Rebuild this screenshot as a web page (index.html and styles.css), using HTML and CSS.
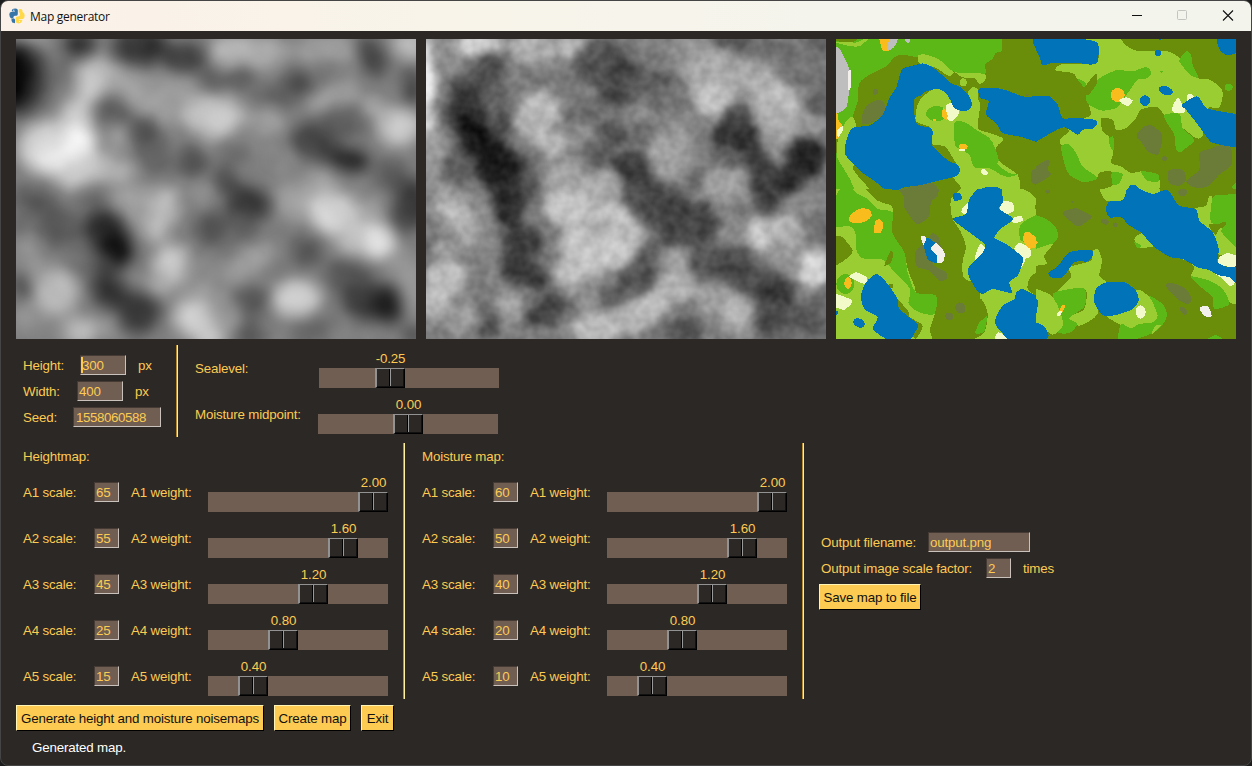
FILE: index.html
```html
<!DOCTYPE html>
<html lang="en">
<head>
<meta charset="utf-8">
<title>Map generator</title>
<link rel="stylesheet" href="styles.css">
</head>
<body>
<div class="window">
  <header class="titlebar">
    <svg class="logo" viewBox="0 0 16 16">
      <path fill="#3775a9" d="M4.500.8Q7.500-.2 8.800 1.800V6Q8.800 7.600 7.400 7.800H5.800Q4.200 8 4.200 10.400H2.200Q.2 9 .3 6.300Q.5 4 2.200 4H6V3.500H2.800V2.400Q3.200 1.200 4.500.8Z"/>
      <path fill="#ffd94a" d="M9.800 1.200Q12.800.6 13.500 2.500V4Q15.700 4.500 15.700 7.500Q15.600 10.500 14 11H9.800V11.800H13.200V13Q12.500 15.200 9.600 15.400Q6.600 15 6.600 13.500V10.400Q7 8.800 8.600 8.600L10.200 8.300Q11.200 7.500 11 5.500L9.800 4Z"/>
      <path fill="#3775a9" d="M2.200 11.500l2.600-1.200 1.200 1.200v3.700l-2.800-.8z"/><circle cx="4.800" cy="2.200" r=".6" fill="#fff"/><circle cx="10.500" cy="13.500" r=".6" fill="#fff"/>
    </svg>
    <span class="title">Map generator</span>
    <svg class="controls" viewBox="0 0 110 30">
      <path d="M1 14.500h10" stroke="#111"/>
      <rect x="46.500" y="9.500" width="9" height="9" rx="1" fill="none" stroke="#c4c4c0"/>
      <path d="M92 9.500l10 10M102 9.500l-10 10" stroke="#111" stroke-width="1.100"/>
    </svg>
  </header>
  <main class="content">
    <section class="maps">
      <svg class="map" id="height" viewBox="0 3 1200 900"></svg>
      <svg class="map" id="moisture" viewBox="0 3 1200 900"></svg>
      <svg class="map" id="terrain" viewBox="0 3 1200 900"></svg>
    </section>
    <section class="general">
      <div class="size">
        <div class="field"><label class="l-height">Height:</label><span class="input w46"><i class="caret"></i>300</span><label class="unit">px</label></div>
        <div class="field"><label class="l-width">Width:</label><span class="input w46">400</span><label class="unit">px</label></div>
        <div class="field"><label class="l-seed">Seed:</label><span class="input w88 seed">1558060588</span></div>
      </div>
      <div class="levels">
        <div class="level"><label class="l-sea">Sealevel:</label><div class="slider" style="--x:56px"><output>-0.25</output><div class="track"><b class="thumb"></b></div></div></div>
        <div class="level"><label class="l-mid">Moisture midpoint:</label><div class="slider" style="--x:75px"><output>0.00</output><div class="track"><b class="thumb"></b></div></div></div>
      </div>
    </section>
    <section class="settings">
      <div class="weights" id="heightWeights"><h2>Heightmap:</h2></div>
      <div class="weights" id="moistureWeights"><h2>Moisture map:</h2></div>
      <div class="output">
        <div class="field"><label class="l-file">Output filename:</label><span class="input w102">output.png</span></div>
        <div class="field"><label class="l-factor">Output image scale factor:</label><span class="input w25">2</span><label class="unit">times</label></div>
        <button class="btn b-save">Save map to file</button>
      </div>
    </section>
    <section class="actions">
      <button class="btn b-gen">Generate height and moisture noisemaps</button>
      <button class="btn b-create">Create map</button>
      <button class="btn b-exit">Exit</button>
    </section>
    <p class="status">Generated map.</p>
  </main>
</div>
<script src="script.js"></script>
</body>
</html>
```
FILE: styles.css
```css
* { box-sizing: border-box; }
body { margin: 0; width: 1252px; height: 766px; overflow: hidden; background: #1c1c1c; font-family: "Liberation Sans", Arial, sans-serif; }
.window { width: 1252px; height: 766px; border: 1px solid #454545; border-radius: 8px; overflow: hidden; background: #2c2825; color: #fdcb52; font-size: 13.333px; letter-spacing: -.17px; }
.titlebar { height: 30px; display: flex; align-items: center; padding-left: 8px; background: linear-gradient(90deg, #fbf1e8, #f8f4ea 35%, #f5f4ec 65%, #f3f4ec); color: #111; }
.logo { width: 16px; height: 16px; margin-top: -1px; }
.title { margin-left: 5px; font: 12px "Open Sans", sans-serif; letter-spacing: -.28px; }
.controls { width: 110px; height: 30px; margin-left: auto; margin-right: 10px; }
.content { padding: 8px 15px 0; }
.maps { display: flex; gap: 10px; }
.map { display: block; width: 400px; height: 300px; overflow: hidden; background: #808080; }
label, output, h2, .status, .btn { white-space: nowrap; }
.general { display: flex; margin-top: 6px; height: 92px; }
.size { width: 162px; padding: 10px 0 0 7px; box-shadow: inset -1px 0 #fff29a, inset -2px 0 #b98a2e; display: flex; flex-direction: column; gap: 6px; }
.field { display: flex; height: 20px; line-height: 21px; }
.input { height: 20px; padding: 0 1px; line-height: 19px; background: #705e52; border: 1px solid; border-color: #463b34 #c9c1bb #c9c1bb #463b34; white-space: nowrap; position: relative; letter-spacing: -.17px; }
.seed { padding-left: 2px; letter-spacing: -.41px; }
.caret { position: absolute; left: 0; top: 1px; width: 2px; height: 16px; background: #fdcb52; }
.w46 { width: 46px; } .w88 { width: 88px; } .w102 { width: 102px; } .w25 { width: 25px; }
.l-height { width: 57px; } .l-width { width: 54px; } .l-seed { width: 50px; }
.unit { margin-left: 12px; }
.levels { padding-left: 17px; }
.level { display: flex; height: 46px; padding-top: 3px; }
.l-sea, .l-mid { line-height: 42px; }
.l-sea { width: 124px; } .l-mid { width: 123px; }
.slider { width: 180px; }
.slider output { width: 31px; margin-left: var(--x); display: flex; justify-content: center; height: 20px; line-height: 21px; }
.track { height: 20px; background: #705e52; }
.thumb { display: flex; width: 30px; height: 20px; margin-left: var(--x); background: linear-gradient(90deg, transparent 12px, #000 12px 13px, #999 13px 14px, transparent 14px) #2c2825; border: solid; border-width: 1px 1px 1px 2px; border-color: #929292 #000 #000 #929292; box-shadow: inset -1px -1px #111; }
.settings { display: flex; height: 256px; margin-top: 6px; }
.weights { box-shadow: inset -1px 0 #fff29a, inset -2px 0 #b98a2e; padding: 3px 0 0 7px; }
#heightWeights { width: 389px; }
#moistureWeights { width: 399px; padding-left: 17px; }
h2 { margin: 0; font-size: 13.333px; font-weight: normal; height: 26px; line-height: 21px; }
.weight { display: flex; height: 46px; }
.weight > label, .weight > .input { margin-top: 10px; line-height: 21px; height: 20px; }
.weight > .input { width: 25px; line-height: 19px; }
.l-scale { width: 71px; }
.l-weight { width: 77px; margin-left: 12px; }
.output { padding: 89px 0 0 15px; display: flex; flex-direction: column; gap: 6px; }
.output .field { padding-left: 2px; }
.l-file { width: 107px; } .l-factor { width: 165px; }
.btn { height: 26px; padding: 0; text-align: center; font: 13.333px "Liberation Sans", Arial, sans-serif; line-height: 25px; color: #111; background: #fdcb52; border: 1px solid; border-color: #fff4b4 #000 #000 #fff4b4; letter-spacing: -.17px; }
.b-save { width: 102px; }
.actions { display: flex; gap: 10px; margin-top: 6px; }
.b-gen { width: 248px; } .b-create { width: 77px; } .b-exit { width: 33px; }
.status { margin: 7px 0 0 16px; line-height: 20px; color: #fff; }
#terrain { shape-rendering: crispEdges; background: #6b8e0a; }
```
FILE: script.js
```js
// Weight rows
function rows(id, scales) {
  const weights = ['2.00', '1.60', '1.20', '0.80', '0.40'];
  document.getElementById(id).insertAdjacentHTML('beforeend', scales.map((s, i) =>
    `<div class="weight"><label class="l-scale">A${i + 1} scale:</label><span class="input">${s}</span>` +
    `<label class="l-weight">A${i + 1} weight:</label><div class="slider" style="--x:${150 - i * 30}px">` +
    `<output>${weights[i]}</output><div class="track"><b class="thumb"></b></div></div></div>`).join(''));
}
rows('heightWeights', [65, 55, 45, 25, 15]);
rows('moistureWeights', [60, 50, 40, 20, 10]);

// Noise maps: soft blobs given as x y rx ry angle grey
function noise(id, blur, base, text, grain) {
  const blobs = text.trim().split(/\s*;\s*/).filter(Boolean).map(t => {
    const [x, y, rx, ry, a, g] = t.split(/\s+/).map(Number);
    return `<ellipse cx="${x}" cy="${y}" rx="${rx}" ry="${ry}" transform="rotate(${a} ${x} ${y})" fill="rgb(${g},${g},${g})"/>`;
  }).join('');
  document.getElementById(id).innerHTML =
    `<defs><filter id="${id}B" filterUnits="userSpaceOnUse" x="-200" y="-200" width="1600" height="1300" color-interpolation-filters="sRGB"><feGaussianBlur stdDeviation="${blur}"/></filter>` +
    `<filter id="${id}G" color-interpolation-filters="sRGB" x="0" y="0" width="1" height="1"><feTurbulence type="fractalNoise" baseFrequency="${grain[0]}" numOctaves="2" seed="7"/><feColorMatrix values="1.6 0 0 0 -.3 1.6 0 0 0 -.3 1.6 0 0 0 -.3 0 0 0 0 1"/></filter></defs>` +
    `<g filter="url(#${id}B)"><rect x="-200" y="-200" width="1600" height="1300" fill="rgb(${base},${base},${base})"/>${blobs}</g>` +
    `<rect y="3" width="1200" height="900" filter="url(#${id}G)" opacity="${grain[1]}"/>`;
}
noise('height', 23, 126, `
30 -10 70 30 0 165; 0 120 95 115 0 52; -10 120 55 90 0 0; 190 20 45 40 0 40; 130 100 30 60 20 110;
370 25 85 60 0 58; 410 20 30 40 0 38; 510 60 70 45 0 62; 700 45 125 55 0 172; 640 20 50 30 0 190; 930 40 100 50 0 158;
1070 55 35 65 -30 62; 1185 20 55 45 0 195; 1190 145 30 60 0 65;
240 120 65 65 -20 190; 220 150 35 60 20 205; 330 150 60 70 -30 165; 460 160 90 50 0 158; 600 130 45 35 0 95; 680 120 40 35 0 88; 850 135 45 45 20 68; 780 180 70 40 0 98; 930 100 60 30 0 115; 985 165 50 40 0 160; 925 195 45 40 0 165;
290 220 60 45 20 90; 420 230 60 60 0 160; 590 230 100 60 0 196; 600 260 50 40 0 208; 750 250 60 45 0 160; 180 240 50 60 0 205;
120 330 115 85 0 212; 190 310 50 50 0 255; 110 360 45 40 0 242; 210 400 90 50 -15 210; 300 400 70 30 -10 185; 310 300 40 50 0 155;
390 290 50 60 -40 78; 420 360 60 50 0 100; 530 370 45 45 0 80; 650 350 60 40 0 110; 580 320 30 30 0 145; 780 350 60 60 0 135;
980 250 80 50 0 95; 890 310 65 55 20 68; 960 350 70 35 20 58; 1010 370 55 30 0 30; 1150 265 65 60 0 205; 1080 215 50 30 35 175;
1130 410 50 50 0 85; 1190 500 55 75 10 52; 1160 550 40 40 0 75; 20 490 40 50 0 95; 70 500 50 35 0 80; 10 560 35 70 0 110; 130 570 75 60 0 90; 230 480 45 50 -45 105;
350 500 70 65 20 160; 450 500 50 55 0 190; 420 570 35 40 30 200; 520 500 40 40 0 130; 560 460 40 30 0 150;
630 430 35 45 -35 72; 700 500 65 55 0 52; 600 570 60 50 0 78; 680 570 60 40 0 95; 780 590 60 40 0 125; 830 490 50 60 0 165;
910 440 50 50 0 165; 960 530 85 65 20 210; 925 530 35 35 0 225; 1080 610 60 55 -20 232; 1015 630 50 35 0 190; 1070 520 40 40 0 160;
270 580 65 70 -40 42; 300 640 50 55 0 10; 260 700 40 60 0 65; 280 760 50 50 20 45; 370 820 60 70 30 52; 200 670 40 60 0 110; 40 640 50 50 0 145;
870 640 50 40 35 82; 800 680 60 40 0 115; 720 660 65 40 -30 162; 660 700 50 35 0 160; 470 680 60 60 -30 205; 430 740 50 40 0 170; 560 700 60 50 0 135; 560 780 70 50 0 155;
1000 720 80 60 30 82; 1050 790 75 60 30 62; 1115 800 45 60 -20 28; 1170 690 50 60 20 150; 1190 780 30 70 0 155; 
30 740 45 40 0 75; 120 760 70 70 0 190; 60 700 40 30 0 150; 40 840 60 50 0 148; 180 880 65 40 0 195; 110 890 50 20 0 130; 270 870 35 40 0 150;
530 840 60 55 0 210; 580 900 50 35 0 210; 710 790 60 45 0 85; 700 890 50 40 0 85; 640 840 40 50 0 150; 840 780 75 55 -10 215; 825 800 40 30 0 215; 770 860 45 35 0 125; 880 880 60 40 0 100; 1020 885 90 30 0 130; 950 830 35 30 0 120; 1190 890 30 30 0 75`, [.012, .04]);
noise('moisture', 15, 126, `
0 110 30 110 0 255; -5 280 35 75 0 225; 60 60 50 60 0 145; 160 20 70 35 0 225; 320 30 70 50 0 180; 440 30 45 35 0 200; 20 350 40 80 0 160;
190 100 50 60 0 70; 120 150 50 40 0 65; 280 130 60 50 0 120; 390 140 60 50 0 125; 550 80 110 75 0 78; 590 100 50 50 0 62; 680 140 60 50 0 88; 570 180 50 30 0 52; 660 40 60 40 0 125;
200 200 50 50 0 95; 120 230 60 70 -10 38; 120 265 25 35 0 5; 170 330 70 75 25 8; 230 400 70 70 20 14; 100 390 50 60 30 85; 230 260 35 45 0 75; 250 490 50 80 10 35; 310 430 30 60 0 75; 290 610 60 50 0 48; 280 690 60 50 30 50; 330 720 40 35 0 52; 
340 220 65 60 0 195; 370 320 50 40 0 195; 320 260 60 40 0 185; 470 230 60 60 0 110; 470 330 60 70 10 145; 330 370 30 40 0 110; 
560 290 45 45 0 75; 520 350 50 50 0 90; 640 230 60 35 0 145; 640 290 50 40 0 105; 620 400 65 60 20 48; 660 480 70 60 0 70; 730 520 80 65 0 60; 830 550 60 60 0 62; 760 590 70 45 0 62; 650 640 50 40 0 88; 
730 350 70 70 0 165; 750 270 50 40 0 150; 720 200 60 50 0 115; 850 90 80 70 0 175; 860 180 60 60 0 200; 960 120 90 55 0 175; 780 30 60 40 0 150; 
930 10 70 25 0 78; 1040 30 80 30 0 105; 1140 90 80 70 0 115; 1180 10 40 25 0 85; 1050 210 75 80 0 192; 1190 200 40 40 0 85; 1060 270 50 60 0 180; 1150 260 50 30 0 160;
930 290 70 55 0 38; 940 230 50 30 0 75; 900 360 60 30 20 100; 980 340 30 60 -20 45; 1020 410 50 60 20 52; 1140 360 60 65 20 28; 1090 430 40 45 30 35; 1030 480 50 50 0 55; 1050 330 25 50 0 145; 
820 420 40 30 0 105; 900 450 70 60 0 165; 1130 510 70 50 0 140; 930 520 70 50 0 130; 1180 560 40 50 0 110;
60 480 60 50 0 155; 70 530 60 40 0 200; 130 570 40 50 0 185; 20 560 40 40 0 130; 10 640 50 45 0 98; 60 640 50 35 0 160; 60 720 65 50 0 200; 20 790 50 50 0 195; 180 560 30 90 -10 140; 170 680 50 60 0 130; 
440 500 85 70 0 208; 530 560 100 75 0 205; 480 640 90 80 0 205; 430 700 50 45 0 200; 560 640 70 50 0 210; 530 450 60 60 0 175; 410 420 60 50 0 170; 510 570 40 25 0 170; 620 590 40 40 0 190; 380 640 25 50 0 120;
640 720 60 45 0 75; 560 770 40 30 0 80; 460 780 60 50 0 150; 370 810 60 50 -40 68; 330 840 40 30 0 60; 440 840 30 60 0 115; 240 810 55 50 0 165; 170 760 40 50 0 120; 190 860 40 50 0 82; 100 840 60 50 0 160; 50 890 50 25 0 125;
510 870 80 45 0 200; 620 840 70 45 0 185; 680 800 60 40 -30 200; 750 740 60 50 0 185; 760 660 50 40 0 165; 850 670 65 60 0 80; 930 680 65 60 30 68; 980 740 60 50 30 68; 1050 760 60 50 20 48; 
1010 590 50 50 0 220; 1070 580 60 50 0 185; 920 590 50 40 0 140; 1160 690 60 55 0 230; 1090 680 40 40 0 145; 1060 640 50 25 0 155; 910 820 70 60 0 195; 960 870 40 30 0 160; 860 780 60 50 0 160;
1050 850 70 60 0 68; 1140 850 70 50 0 78; 1180 800 40 40 0 100; 780 880 80 40 0 70; 700 895 60 20 0 110; 860 870 40 40 0 130; 1100 900 60 15 0 120`, [.028, .12]);

// Terrain map: four tiles, outlines drawn as smooth closed curves
const C = { L: '#9acd32', G: '#5cb817', O: '#6b8e0a', D: '#6b7b38', B: '#0073b9', W: '#f1fac8', S: '#f3f0ec', Y: '#f8bd1d', X: '#bebebe' };
function outline(list, y0, y1) {
  const p = list.trim().split(/\s+/).map(s => s.split(',').map(Number)), n = p.length;
  const t = p.map((q, i) => {
    if (q[0] <= 0 || q[0] >= 600 || q[1] <= y0 || q[1] >= y1) return [0, 0];
    const a = p[(i + n - 1) % n], b = p[(i + 1) % n];
    return [(b[0] - a[0]) / 8, (b[1] - a[1]) / 8];
  });
  let d = 'M' + p[0];
  for (let i = 0; i < n; i++) {
    const j = (i + 1) % n;
    d += `C${p[i][0] + t[i][0]},${p[i][1] + t[i][1]} ${p[j][0] - t[j][0]},${p[j][1] - t[j][1]} ${p[j]}`;
  }
  return d + 'Z';
}
function tile(x, y, y0, y1, text) {
  const shapes = text.trim().split('\n').map(line => {
    const c = C[line.trim()[0]], rest = line.trim().slice(2);
    if (rest[0] === 'o') {
      const [, cx, cy, rx, ry, a] = rest.split(/\s+/);
      return `<ellipse cx="${cx}" cy="${cy}" rx="${rx}" ry="${ry}" transform="rotate(${a || 0} ${cx} ${cy})" fill="${c}"/>`;
    }
    return `<path d="${outline(rest, y0, y1)}" fill="${c}"/>`;
  }).join('');
  return `<svg x="${x}" y="${y + y0}" width="600" height="${y1 - y0}" viewBox="0 ${y0} 600 ${y1 - y0}">${shapes}</svg>`;
}
document.getElementById('terrain').innerHTML = `<rect y="3" width="1200" height="900" fill="${C.O}"/>` +
tile(0, 0, 3, 453, `
G 0,3 498,3 498,38 478,45 470,62 447,80 447,108 380,105 352,100 310,72 262,55 245,58 200,50 175,58 150,85 105,108 70,135 65,190 50,235 40,265 0,290
G 0,340 12,370 40,400 60,453 0,453
O 0,3 65,3 50,12 20,13 0,8
L 0,12 40,12 60,14 85,3 97,3 75,22 60,26 30,22 0,14
L 50,237 30,250 10,290 2,330 5,362 25,395 40,420 55,453 102,453 75,425 50,390 60,370 60,265
L 247,52 270,50 310,65 350,100 380,105 447,108 445,130 430,137 415,120 380,118 355,103 340,115 300,90 262,78 248,75
L 245,200 262,175 300,150 340,165 400,210 395,165 410,147 425,155 425,180 433,200 425,260 430,275 460,285 500,300 498,310 480,330 490,370 545,410 553,453 375,453 370,440 350,420 370,400 345,350 325,325 290,320 285,270 240,250
O 288,322 322,325 332,350 360,375 340,380 300,350
O 300,430 352,420 358,435 372,453 300,453
G o 302 227 32 23
G 355,255 385,252 420,275 460,300 475,325 488,365 485,380 520,405 545,410 515,417 490,408 460,390 415,388 400,350 375,335 357,320
L o 382 133 10 12
W 330,205 345,195 367,210 368,228 350,248 335,245
Y 318,225 323,210 334,228 333,245 320,238
Y o 382 326 13 8
W o 378 336 9 4
W o 445 403 11 8 30
Y o 295 246 5 3
X 0,27 12,33 25,60 35,80 42,110 38,170 30,210 0,228
S 36,103 44,98 44,150 36,153
Y 130,3 170,3 158,20 158,38 140,38
X 160,3 185,3 180,20 165,35 153,35
X 205,3 222,3 220,14 210,12
Y 0,225 7,230 8,250 20,265 8,300 0,302
W 5,275 20,265 18,283 5,297
D 78,235 90,205 120,187 140,190 150,210 135,235 105,255 80,258
D o 118 162 8 8
D 200,453 230,445 290,435 305,453
D 600,391 587,400 585,430 600,442
B 192,110 200,92 240,80 265,77 300,95 345,135 375,148 400,175 408,200 400,215 380,220 355,210 345,190 330,165 305,153 270,160 255,172 235,185 237,245 250,262 285,270 290,285 288,320 310,345 340,370 365,380 372,400 360,415 320,425 250,442 210,447 190,453 145,453 110,425 80,405 45,370 28,350 30,310 50,270 100,262 140,230 160,180 180,150
B 430,152 480,150 520,160 560,175 600,175 600,312 560,298 500,285 480,255 450,230 458,190 432,180
B 591,3 600,3 600,32 593,20
B 435,453 450,448 485,448 492,453
D o 573 172 6 3`) +
tile(600, 0, 3, 453, `
L 135,3 255,3 270,22 300,38 360,40 395,40 430,58 440,75 485,120 520,125 555,150 560,175 548,210 515,212 500,292 480,300 440,270 385,230 362,206 315,215 300,240 270,270 240,275 230,245 195,242 200,280 220,298 232,340 225,375 255,385 285,405 320,400 368,420 370,453 205,453 185,425 140,410 75,320 75,300 100,280 80,255 160,235 160,205 150,175 150,150 125,125 110,105 60,98 65,85 85,78 180,75 185,15
O 182,430 190,405 225,400 232,440 200,453 185,453
G 150,175 185,125 240,97 290,100 330,87 347,105 330,122 305,125 265,180 240,210 200,218 170,207 155,195
O 180,108 183,135 160,168 150,168 148,145
G 124,122 150,135 145,148
G 430,70 450,40 465,50 470,80 487,118 465,112
G 385,230 430,228 440,270 475,305 450,330 435,342 420,335 415,290 390,250
G 75,325 100,320 120,345 140,385 180,415 180,425 140,432 100,410 85,375
G 218,305 232,295 233,335 225,330
G 228,402 260,408 250,435 230,440
G 315,400 365,408 368,430 335,428
G o 578 148 12 10
G 590,443 600,435 600,453 590,453
G o 376 101 4 3
D 305,285 325,265 350,263 378,290 375,325 365,350 335,340 315,310 302,300
D o 386 362 7 8
D 397,398 440,395 450,425 430,443 400,435
D 555,322 585,330 587,380 550,410 515,445 480,450 450,430 490,395 490,345 520,333
D 0,385 30,367 42,370 35,395 45,410 25,425 0,440
B 0,3 135,3 185,15 185,70 165,80 125,75 50,75 20,82 12,60 0,35
B 0,175 40,175 65,200 80,240 120,240 175,245 183,258 170,272 140,275 125,290 85,268 45,285 0,312
B o 327 188 15 16
B o 366 45 9 9
B o 372 3 4 2
B o 389 158 22 13 20
B 543,3 600,3 600,45 575,52 555,40 545,20
W 408,210 425,180 440,200 448,222 415,224
W o 463 180 11 12
B 438,200 480,175 497,190 515,212 600,228 600,328 560,322 525,312 500,280 470,240 450,215
Y o 245 171 21 21
W 250,188 270,178 290,188 275,205
B 274,453 285,441 298,441 309,453`) +
tile(0, 453, 0, 450, `
L 0,0 88,0 125,35 165,50 172,75 168,130 205,190 215,240 235,290 245,315 300,320 298,370 282,420 290,450 0,450
G 0,0 50,0 65,15 95,30 125,60 170,70 168,130 205,190 215,250 240,310 300,320 295,375 250,370 218,345 222,300 180,255 140,212 80,208 60,180 58,130 40,112 0,115
L 0,0 12,0 0,20
O 0,142 20,145 50,185 30,210 0,230
O 165,185 172,195 165,220 145,232 150,215
O 180,330 215,365 222,385 260,410 240,450 190,400
G o 28 285 27 30
Y 40,95 45,75 75,58 100,62 107,80 90,97 60,103
Y 113,130 118,98 130,90 142,105 135,130
W 40,262 60,250 92,265 88,285 60,275
Y o 36 282 11 18
W 0,315 50,335 25,362 0,355
O o 165 292 7 7
B 122,255 155,285 185,330 190,360 240,400 245,415 225,450 150,450 110,420 125,385 85,360 75,320 90,280
B o 69 402 18 13 25
B o 0 372 6 6
D 155,0 308,0 305,20 285,40 280,80 250,105 235,100 205,55 205,25 185,0
B 168,0 188,0 188,4 170,4
D 238,220 240,185 275,150 290,133 308,145 315,190 290,225 330,250 332,270 310,275 280,245 245,235
D o 373 357 15 17 -30
D o 340 382 12 11
B 262,160 275,147 300,165 300,185 308,215 300,222 275,210
S 255,142 268,142 270,150 262,168
S 285,180 300,162 325,190 322,218 305,222 303,200
L 375,0 345,30 348,85 375,130 390,175 380,215 382,265 410,280 430,300 435,340 455,375 445,430 415,450 600,450 600,0
O 560,0 600,0 600,28 580,10
O 600,250 580,270 575,300 600,320
O 597,50 600,50 600,70
G 600,78 560,100 550,120 555,155 600,165
G 450,368 452,395 443,430 418,432 430,400
O 380,440 430,330 455,375 430,400 415,430 415,450 380,450
W 492,50 500,35 530,42 533,65 515,75 495,68
W 525,90 555,80 560,95 535,103
W 378,60 395,42 398,75 378,72
W 432,165 447,175 445,190 420,215 418,200
W 535,180 550,162 580,175 585,200 560,210
W 555,205 570,205 557,235
W 475,450 485,430 500,435 515,450
B 425,0 498,0 500,40 490,60 532,90 500,115 475,145 510,165 560,205 555,235 545,260 520,280 527,312 470,300 440,315 420,300 398,260 398,235 440,190 445,165 400,130 350,90 390,75 400,30
B 352,15 370,12 378,30 355,35
B 540,312 560,300 600,320 600,450 515,450 480,410 480,385 500,350 535,330
Y 562,155 565,132 580,130 600,145 600,175 580,178`) +
tile(600, 453, 0, 450, `
L 190,0 278,0 265,35 210,35
L 310,0 370,0 372,10 350,15
G 0,78 30,90 60,115 65,145 45,168 0,180
L 0,180 50,165 25,200 32,225 0,230
Y o 0 160 5 6
L 165,190 185,180 198,215 190,260 210,280 180,300 185,375 130,410 100,390 115,375 145,360 147,300 55,320 105,265 100,235 165,215
G 50,320 75,305 145,298 147,350 115,375 100,390 125,405 100,432 65,430 80,400
L 0,300 40,315 60,340 75,375 80,410 50,437 0,400
L 300,305 330,315 350,335 368,370 355,402 310,405 280,417 210,375
G 340,320 380,345 393,375 385,400 355,430 300,450 245,450 255,405 285,418 310,405 350,400 365,380 350,340
L 350,425 360,410 375,408 350,435
L 295,150 320,133 355,170 310,175
G 295,158 315,170 305,178
L 520,20 510,50 475,60 490,100 530,130 545,195 600,200 600,160 575,130 540,100 530,30
G 530,25 560,18 600,15 600,175 575,150 555,125 570,105 525,100
O 518,105 545,105 568,98 568,110 550,120 540,138 530,130
L 410,200 480,215 600,260 600,345 580,340 545,300 500,270 465,262 475,235 450,215
G 465,262 520,275 560,300 580,345 535,360 530,325 490,290
G 515,450 540,438 560,450
W 550,205 575,192 600,200 600,235 570,232 547,222
W 520,240 590,255 595,285 580,290 560,270
B 272,0 312,0 350,15 385,3 400,7 430,50 480,60 490,95 530,130 548,180 545,220 580,235 600,232 600,285 580,265 545,258 520,243 485,235 440,210 400,203 350,170 315,130 280,110 255,85 220,85 210,60 220,38 260,33
B 100,190 165,183 170,200 155,217 115,220 80,265 45,265 38,250 65,232
B 180,300 210,280 265,280 300,305 308,335 290,360 240,378 200,378 175,340
B 0,330 7,335 5,350 0,380
B 0,400 25,412 38,440 30,450 0,450
W o 314 369 15 20
S 492,355 515,352 527,380 510,383 495,368
Y 75,352 88,348 80,368 72,370
W 65,370 78,365 73,380 63,380
D 82,68 120,58 165,80 160,92 125,112 85,80
D o 207 98 12 8 20
D o 238 107 7 7
D o 35 8 7 6
D o 440 10 14 11
D o 110 38 4 3
D 390,285 410,282 450,300 467,330 455,345 430,335 395,300
D o 443 365 8 14 -40`);
```
